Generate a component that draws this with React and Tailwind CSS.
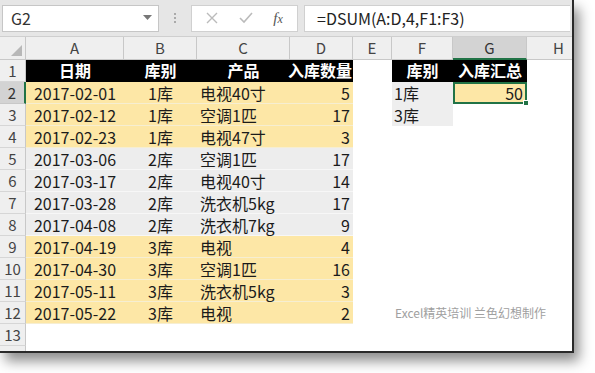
import React from "react";

const rows = [
  ["2017-02-01", "1库", "电视40寸", "5", "y"],
  ["2017-02-12", "1库", "空调1匹", "17", "y"],
  ["2017-02-23", "1库", "电视47寸", "3", "y"],
  ["2017-03-06", "2库", "空调1匹", "17", "g"],
  ["2017-03-17", "2库", "电视40寸", "14", "g"],
  ["2017-03-28", "2库", "洗衣机5kg", "17", "g"],
  ["2017-04-08", "2库", "洗衣机7kg", "9", "g"],
  ["2017-04-19", "3库", "电视", "4", "y"],
  ["2017-04-30", "3库", "空调1匹", "16", "y"],
  ["2017-05-11", "3库", "洗衣机5kg", "3", "y"],
  ["2017-05-22", "3库", "电视", "2", "y"],
];

const font = { fontFamily: '"Noto Sans CJK SC", "Noto Sans", sans-serif' };

function RowHdr({ n, sel }) {
  return (
    <div
      className={
        sel
          ? "flex items-center justify-center bg-[#d3d3d3] border-r-2 border-r-[#217346] border-b border-b-[#c8c8c8] text-[15px] text-[#333]"
          : "flex items-center justify-center bg-[#efefef] border-r border-r-[#c8c8c8] border-b border-b-[#d6d6d6] text-[15px] text-[#444]"
      }
    >
      {n}
    </div>
  );
}

export default function App() {
  return (
    <div className="w-[595px] h-[373px] bg-white overflow-hidden" style={font}>
      <div className="w-[574px] h-[353px] bg-white border-r-2 border-b-2 border-[#2a2a2a] shadow-[5px_8px_12px_rgba(0,0,0,0.45)] overflow-hidden flex flex-col">
        {/* toolbar */}
        <div className="h-[37px] shrink-0 bg-[#e6e6e6] flex items-center px-[2px] gap-0 border-b border-[#cfcfcf]">
          <div className="w-[157px] h-[27px] bg-white border border-[#c6c6c6] flex items-center justify-between pl-[8px] pr-[6px]">
            <span className="text-[16px] leading-none text-[#333]">G2</span>
            <svg width="9" height="6" viewBox="0 0 9 6"><path d="M0 0h9L4.5 5z" fill="#777" /></svg>
          </div>
          <div className="w-[32px] flex flex-col items-center gap-[2px]">
            <span className="w-[2px] h-[2px] bg-[#aaa]" />
            <span className="w-[2px] h-[2px] bg-[#aaa]" />
            <span className="w-[2px] h-[2px] bg-[#aaa]" />
          </div>
          <div className="w-[107px] h-[27px] bg-white border border-[#d0d0d0] flex items-center justify-around px-[4px]">
            <svg width="12" height="12" viewBox="0 0 12 12"><path d="M1 1l10 10M11 1L1 11" stroke="#bbb" strokeWidth="1.4" /></svg>
            <svg width="14" height="12" viewBox="0 0 14 12"><path d="M1 6l4 4L13 1" stroke="#bbb" strokeWidth="1.6" fill="none" /></svg>
            <span className="text-[15px] leading-none italic text-[#555]" style={{ fontFamily: '"Liberation Serif", serif' }}>f<span className="text-[12px]">x</span></span>
          </div>
          <div className="flex-1 h-[27px] ml-[6px] bg-white border-l border-y border-[#d0d0d0] flex items-center pl-[12px]">
            <span className="text-[16px] leading-none text-[#222]">=DSUM(A:D,4,F1:F3)</span>
          </div>
        </div>

        {/* grid */}
        <div className="grid grid-cols-[26px_98px_73px_93px_63px_39px_61px_74px_1fr] grid-rows-[23px_repeat(14,22px)] text-[16px] leading-[20px] text-[#1b1b1b]">
          {/* column headers */}
          <div className="bg-[#efefef] border-r border-b border-[#c8c8c8] relative">
            <svg className="absolute right-[3px] bottom-[3px]" width="11" height="11" viewBox="0 0 11 11"><path d="M11 0v11H0z" fill="#b8b8b8" /></svg>
          </div>
          {["A", "B", "C", "D", "E", "F"].map((c) => (
            <div key={c} className="bg-[#efefef] border-r border-b border-[#c8c8c8] flex items-center justify-center text-[15px] text-[#444]">{c}</div>
          ))}
          <div className="bg-[#d3d3d3] border-r border-r-[#c8c8c8] border-b-2 border-b-[#217346] flex items-center justify-center text-[15px] text-[#333]">G</div>
          <div className="bg-[#efefef] border-b border-[#c8c8c8] flex items-center justify-end pr-[8px] text-[15px] text-[#444]">H</div>

          {/* row 1 */}
          <RowHdr n={1} />
          <div className="bg-black text-white font-bold flex items-center justify-center pb-[2px]">日期</div>
          <div className="bg-black text-white font-bold flex items-center justify-center pb-[2px]">库别</div>
          <div className="bg-black text-white font-bold flex items-center justify-center pb-[2px]">产品</div>
          <div className="bg-black text-white font-bold flex items-center justify-end pr-[1px] pb-[2px] whitespace-nowrap">入库数量</div>
          <div />
          <div className="bg-black text-white font-bold flex items-center justify-center pb-[2px]">库别</div>
          <div className="bg-black text-white font-bold flex items-center justify-center pb-[2px]">入库汇总</div>
          <div />

          {rows.map((r, i) => {
            const n = i + 2;
            const cell =
              r[4] === "y"
                ? "bg-[#fde7a6] border-b border-[#f6eed2] flex items-center"
                : "bg-[#ededed] border-b border-[#f7f7f7] flex items-center";
            return (
              <React.Fragment key={n}>
                <RowHdr n={n} sel={n === 2} />
                <div className={cell + " justify-center"}>{r[0]}</div>
                <div className={cell + " justify-center"}>{r[1]}</div>
                <div className={cell + " justify-start pl-[3px]"}>{r[2]}</div>
                <div className={cell + " justify-end pr-[3px]"}>{r[3]}</div>
                <div />
                {n === 2 && <div className="bg-[#eeeeee] flex items-center pl-[2px]">1库</div>}
                {n === 3 && <div className="bg-[#eeeeee] flex items-center pl-[2px]">3库</div>}
                {n === 12 && (
                  <div className="flex items-center pl-[3px] whitespace-nowrap text-[12px] text-[#a0a0a0] overflow-visible">Excel精英培训 兰色幻想制作</div>
                )}
                {n !== 2 && n !== 3 && n !== 12 && <div />}
                {n === 2 ? (
                  <div className="relative bg-[#fde7a6] border-2 border-[#217346] flex items-center justify-end pr-[2px]">
                    50
                    <span className="absolute right-[-4px] bottom-[-4px] w-[6px] h-[6px] bg-[#217346] border border-white" />
                  </div>
                ) : (
                  <div />
                )}
                <div />
              </React.Fragment>
            );
          })}

          <RowHdr n={13} />
          <div className="col-span-8" />
          <RowHdr n={14} />
          <div className="col-span-8" />
        </div>
      </div>
    </div>
  );
}
